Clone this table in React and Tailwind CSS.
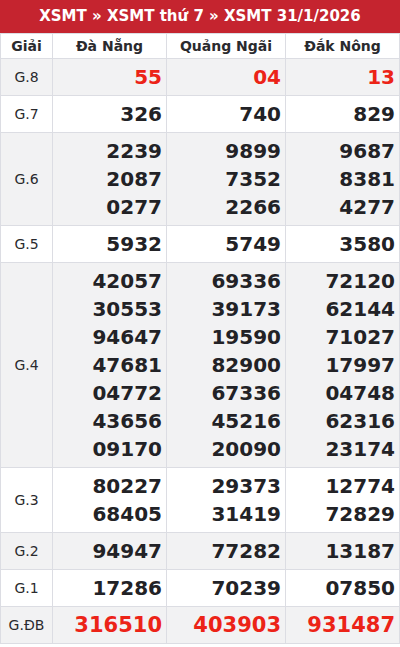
import React from "react";

const rows = [
  { g: "G.8", v: [["55"], ["04"], ["13"]], red: true, alt: true },
  { g: "G.7", v: [["326"], ["740"], ["829"]] },
  { g: "G.6", v: [["2239", "2087", "0277"], ["9899", "7352", "2266"], ["9687", "8381", "4277"]], alt: true },
  { g: "G.5", v: [["5932"], ["5749"], ["3580"]] },
  {
    g: "G.4",
    v: [
      ["42057", "30553", "94647", "47681", "04772", "43656", "09170"],
      ["69336", "39173", "19590", "82900", "67336", "45216", "20090"],
      ["72120", "62144", "71027", "17997", "04748", "62316", "23174"],
    ],
    alt: true,
  },
  { g: "G.3", v: [["80227", "68405"], ["29373", "31419"], ["12774", "72829"]] },
  { g: "G.2", v: [["94947"], ["77282"], ["13187"]], alt: true },
  { g: "G.1", v: [["17286"], ["70239"], ["07850"]] },
  { g: "G.ĐB", v: [["316510"], ["403903"], ["931487"]], red: true, big: true, alt: true },
];

export default function App() {
  return (
    <div className="w-[400px] bg-white" style={{ fontFamily: '"DejaVu Sans", sans-serif' }}>
      <div className="h-[33px] bg-[#c5242f] text-white font-bold text-[15px] flex items-center justify-center">
        XSMT » XSMT thứ 7 » XSMT 31/1/2026
      </div>
      <table className="w-[400px] border-collapse table-fixed border border-[#dcdde3]">
        <colgroup>
          <col className="w-[52px]" />
          <col className="w-[114px]" />
          <col className="w-[119px]" />
          <col />
        </colgroup>
        <thead>
          <tr className="h-[25px]">
            <th className="border border-[#dcdde3] text-[14px] font-bold text-[#2a2a2e] text-center p-0">Giải</th>
            <th className="border border-[#dcdde3] text-[14px] font-bold text-[#2a2a2e] text-center p-0">Đà Nẵng</th>
            <th className="border border-[#dcdde3] text-[14px] font-bold text-[#2a2a2e] text-center p-0">Quảng Ngãi</th>
            <th className="border border-[#dcdde3] text-[14px] font-bold text-[#2a2a2e] text-center p-0">Đắk Nông</th>
          </tr>
        </thead>
        <tbody>
          {rows.map((r) => (
            <tr key={r.g} className={r.alt ? "bg-[#f2f2f3]" : "bg-white"}>
              <td className="border border-[#dcdde3] text-center text-[14px] text-[#2a2a2e] p-0">{r.g}</td>
              {r.v.map((col, i) => (
                <td key={i} className="border border-[#dcdde3] text-right pr-[4px] py-[4px] pl-0 align-middle">
                  {col.map((n) => (
                    <div
                      key={n}
                      className={
                        "leading-[28px] font-bold " +
                        (r.red ? "text-[#ec2317] " : "text-[#222226] ") +
                        (r.big ? "text-[21px]" : "text-[20px]")
                      }
                    >
                      {n}
                    </div>
                  ))}
                </td>
              ))}
            </tr>
          ))}
        </tbody>
      </table>
    </div>
  );
}
